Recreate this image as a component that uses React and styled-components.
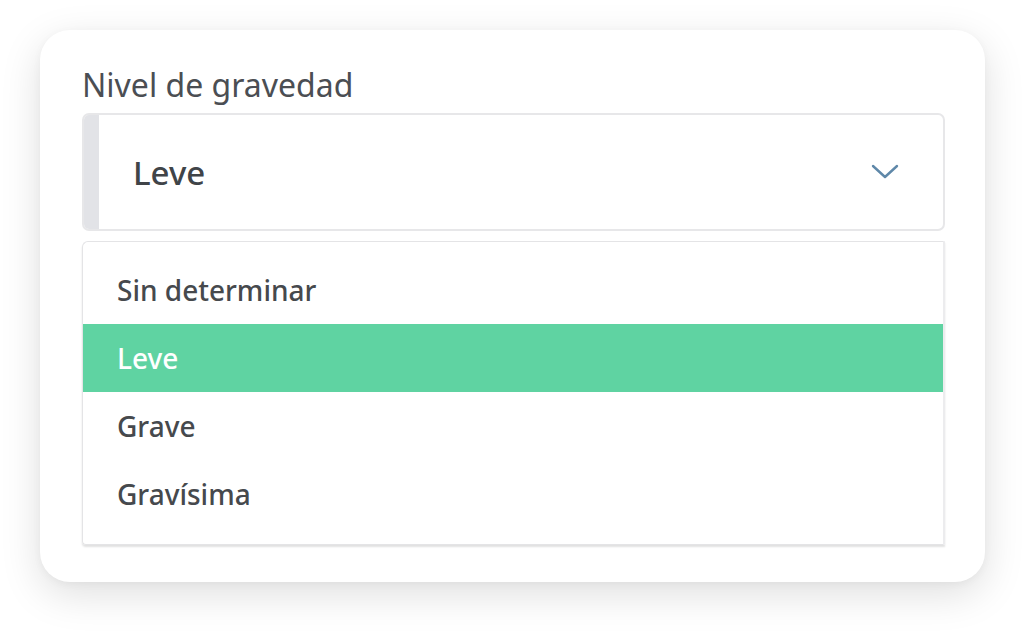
import React from "react"
import styled, { createGlobalStyle } from "styled-components"

const GlobalStyle = createGlobalStyle`
  html, body {
    margin: 0;
    padding: 0;
    background: #ffffff;
  }
  body {
    font-family: "Noto Sans", "Open Sans", sans-serif;
  }
`

const options = ["Sin determinar", "Leve", "Grave", "Gravísima"]

const Page = styled.div`
  width: 1024px;
  height: 631px;
  box-sizing: border-box;
  padding: 30px 39px 0 40px;
  overflow: hidden;
`

const Card = styled.div`
  box-sizing: border-box;
  height: 552px;
  background: #fff;
  border-radius: 30px;
  box-shadow: 0 12px 40px rgba(0, 0, 0, 0.13), 0 2px 8px rgba(0, 0, 0, 0.04);
  padding: 35px 40px 0 42px;
  display: flex;
  flex-direction: column;
`

const Label = styled.div`
  font-size: 32px;
  color: #4b4e53;
  line-height: 40px;
  margin-bottom: 8px;
`

const Select = styled.div`
  box-sizing: border-box;
  height: 118px;
  border: 2px solid #e7e7e9;
  border-radius: 7px;
  display: flex;
  align-items: stretch;
  overflow: hidden;
`

const Bar = styled.div`
  width: 15px;
  background: #e2e3e7;
`

const Value = styled.div`
  flex: 1;
  display: flex;
  align-items: center;
  justify-content: space-between;
  padding: 0 44px 0 34px;
  font-size: 33px;
  font-weight: 500;
  color: #404448;
`

const Chevron = styled.svg`
  width: 28px;
  height: 16px;
`

const List = styled.ul`
  box-sizing: border-box;
  list-style: none;
  margin: 10px 0 0;
  padding: 14px 0 16px;
  border: 1px solid #e4e4e6;
  border-right: 2px solid #ececee;
  border-radius: 6px 0 0 4px;
  box-shadow: 0 2px 2px rgba(0, 0, 0, 0.12);
`

const Item = styled.li`
  height: 68px;
  display: flex;
  align-items: center;
  padding-left: 34px;
  font-size: 28px;
  font-weight: 500;
  color: ${p => (p.$active ? "#ffffff" : "#46494d")};
  background: ${p => (p.$active ? "#5fd3a2" : "transparent")};
`

export default function App() {
  return (
    <Page>
      <GlobalStyle />
      <Card>
        <Label>Nivel de gravedad</Label>
        <Select>
          <Bar />
          <Value>
            Leve
            <Chevron viewBox="0 0 28 16">
              <path d="M2 2 L14 13 L26 2" fill="none" stroke="#5f88a9" strokeWidth="2.4" strokeLinecap="round" strokeLinejoin="round" />
            </Chevron>
          </Value>
        </Select>
        <List>
          {options.map(o => (
            <Item key={o} $active={o === "Leve"}>
              {o}
            </Item>
          ))}
        </List>
      </Card>
    </Page>
  )
}
